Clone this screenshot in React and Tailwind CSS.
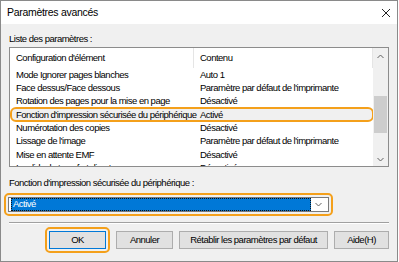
import { useState } from "react";

const rows = [
  { item: "Mode Ignorer pages blanches", value: "Auto 1" },
  { item: "Face dessus/Face dessous", value: "Paramètre par défaut de l'imprimante" },
  { item: "Rotation des pages pour la mise en page", value: "Désactivé" },
  { item: "Fonction d'impression sécurisée du périphérique", value: "Activé" },
  { item: "Numérotation des copies", value: "Désactivé" },
  { item: "Lissage de l'image", value: "Paramètre par défaut de l'imprimante" },
  { item: "Mise en attente EMF", value: "Désactivé" },
  { item: "Invalider le transfert direct", value: "Désactivé" },
];

function Chevron({ up, className }) {
  return (
    <svg width="7" height="5" viewBox="0 0 7 5" className={className}>
      <path
        d={up ? "M0.5 4L3.5 1L6.5 4" : "M0.5 1L3.5 4L6.5 1"}
        fill="none"
        stroke="#606060"
        strokeWidth="1"
      />
    </svg>
  );
}

export default function App() {
  const [selected] = useState(3);

  return (
    <div
      className="w-[398px] h-[262px] bg-[#f0f0f0] border border-[#8a8a8a] flex flex-col text-[9.5px] text-black tracking-[-0.5px] overflow-hidden"
      style={{ fontFamily: '"Liberation Sans", Arial, sans-serif' }}
    >
      <div className="h-[23px] bg-white flex items-center justify-between pl-[6px] pr-[6px] shrink-0">
        <span className="text-[10.5px] tracking-[-0.3px]">Paramètres avancés</span>
        <svg width="10" height="10" viewBox="0 0 10 10">
          <path d="M1 1L9 9M9 1L1 9" stroke="#222" strokeWidth="1" />
        </svg>
      </div>

      <div className="flex flex-col px-[8px] pt-[9px]">
        <div className="h-[12px] leading-[12px]">Liste des paramètres :</div>

        <div className="mt-[2px] h-[120px] border border-[#8c8c8c] bg-white flex overflow-hidden">
          <div className="flex-1 flex flex-col min-w-0">
            <div className="h-[20px] shrink-0 flex items-center border-r border-[#e5e5e5]">
              <div className="w-[184px] h-full flex items-center pl-[6px] border-r border-[#e5e5e5]">
                Configuration d'élément
              </div>
              <div className="flex-1 pl-[6px]">Contenu</div>
            </div>
            {rows.map((r, i) => (
              <div
                key={r.item}
                className={
                  i === selected
                    ? "h-[13.33px] shrink-0 flex items-center bg-[#f0f0f0] rounded-[5px] outline-2 outline-[#f4a01b] -outline-offset-1 ml-[1px]"
                    : "h-[13.33px] shrink-0 flex items-center ml-[1px]"
                }
              >
                <div className="w-[183px] pl-[5px] whitespace-nowrap">{r.item}</div>
                <div className="flex-1 pl-[6px] whitespace-nowrap">{r.value}</div>
              </div>
            ))}
          </div>
          <div className="w-[15px] shrink-0 bg-[#f0f0f0] flex flex-col items-center">
            <div className="h-[17px] flex items-center justify-center">
              <Chevron up />
            </div>
            <div className="flex-1 w-full flex flex-col px-[1px]">
              <div className="h-[31px]" />
              <div className="h-[37px] bg-[#cdcdcd]" />
            </div>
            <div className="h-[14px] flex items-center justify-center">
              <Chevron />
            </div>
          </div>
        </div>

        <div className="mt-[10px] h-[12px] leading-[12px]">
          Fonction d'impression sécurisée du périphérique :
        </div>

        <div className="mt-[4px] -ml-[5px] w-[329px] h-[23px] p-[2px] rounded-[5px] border-2 border-[#f4a01b]">
          <div className="h-full border border-[#7a7a7a] bg-white flex items-center pl-[2px] pr-[3px]">
            <div className="w-[300px] h-[13px] bg-[#0078d7] border border-dotted border-[#111] text-white flex items-center pl-[1px]">
              Activé
            </div>
            <div className="flex-1 flex justify-center">
              <Chevron />
            </div>
          </div>
        </div>

        <div className="mt-[6px] border-t border-[#a0a0a0] border-b border-b-white" />

        <div className="mt-[3px] flex items-center justify-end gap-[6px]">
          <div className="p-[2px] rounded-[5px] border-2 border-[#f4a01b]">
            <button className="w-[57px] h-[18px] bg-[#e1e1e1] border border-[#0078d7] flex items-center justify-center">
              OK
            </button>
          </div>
          <button className="w-[57px] h-[18px] bg-[#e1e1e1] border border-[#adadad] flex items-center justify-center">
            Annuler
          </button>
          <button className="w-[149px] h-[18px] bg-[#e1e1e1] border border-[#adadad] flex items-center justify-center">
            Rétablir les paramètres par défaut
          </button>
          <button className="w-[55px] h-[18px] bg-[#e1e1e1] border border-[#adadad] flex items-center justify-center">
            Aide(H)
          </button>
        </div>
      </div>
    </div>
  );
}
